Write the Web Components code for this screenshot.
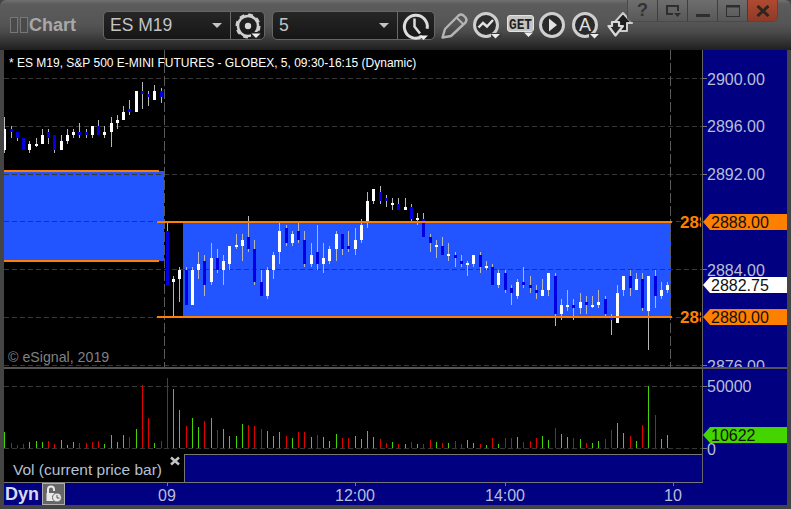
<!DOCTYPE html>
<html>
<head>
<meta charset="utf-8">
<title>Chart</title>
<style>
  html, body { margin: 0; padding: 0; background: #444; }
</style>
</head>
<body>
<trade-window>
  <trade-toolbar slot="toolbar">
    <symbol-combo value="ES M19" field="127" extra="35"><tool-icon name="gear"></tool-icon></symbol-combo>
    <symbol-combo value="5" field="125" extra="38"><tool-icon name="clock"></tool-icon></symbol-combo>
    <tool-icon name="pencil" class="tool"></tool-icon>
    <tool-icon name="trend" class="tool"></tool-icon>
    <tool-icon name="get" class="tool"></tool-icon>
    <tool-icon name="play" class="tool"></tool-icon>
    <tool-icon name="alert" class="tool"></tool-icon>
    <tool-icon name="arrows" class="tool"></tool-icon>
    <window-buttons></window-buttons>
  </trade-toolbar>
  <price-chart slot="price"></price-chart>
  <value-axis slot="priceaxis" origin="50" props='{"labels":[["2900.00",80],["2896.00",127],["2892.00",175],["2884.00",271],["2876.00",367]],"ticks":[78,126,174,269,365],"tags":[["2888.00",222,"#ff8000"],["2882.75",285,"#fff"],["2880.00",317,"#ff8000"]]}'></value-axis>
  <volume-chart slot="volume"></volume-chart>
  <study-legend slot="legend">Vol (current price bar)</study-legend>
  <time-axis slot="time"></time-axis>
  <value-axis slot="volaxis" origin="369" props='{"labels":[["50000",387],["0",450]],"ticks":[386,448],"tags":[["10622",435,"#44d400"]]}'></value-axis>
</trade-window>

<script>
const FONT = `"Liberation Sans", Arial, sans-serif`;

// candles read off the picture in 3x crop units: colour x wickTop wickBottom bodyTop bodyBottom
const CANDLES = [
  { ox: 0, oy: 75, rows: `W 14 126 234 162 225|B 34 153 189 162 171|B 52 171 198 171 189|B 70 189 225 189 225|W 88 198 234 207 225|W 109 189 216 207 213|W 127 162 207 180 207|B 145 162 207 171 189|B 163 180 234 180 225|W 184 180 225 198 225|W 202 162 207 180 198|W 220 162 189 171 180|B 238 144 189 171 180|B 259 162 189 171 180|W 277 153 189 153 180|B 295 135 180 153 180|W 313 153 189 171 180|W 334 126 216 144 171|W 352 120 162 135 144|W 370 93 135 111 135|B 388 75 120 102 111|W 409 48 111 48 111|B 427 21 102 48 57|B 445 48 93 57 66|W 463 30 75 48 75|B 484 39 84 48 66` },
  { ox: 0, oy: 220, rows: `B 502 6 195 33 195|W 520 168 290 177 186|W 538 141 246 150 177|B 559 141 255 150 255|W 577 141 255 150 255|W 595 96 177 132 150|B 613 105 228 123 195|W 634 69 195 114 186|B 652 87 159 114 150|W 670 105 195 123 150|W 688 78 150 78 132|W 709 42 87 75 81|W 727 42 123 60 78|B 745 -12 96 51 87|B 763 60 195 87 186` },
  { ox: 250, oy: 170, rows: `B 34 300 378 336 378|W 52 291 387 300 378|W 70 246 327 255 300|W 88 156 282 183 246|B 109 165 228 174 219|W 127 183 228 192 219|B 145 156 219 183 210|B 163 183 291 210 282|W 184 219 291 255 282|B 202 165 300 246 282|W 220 219 309 264 282|W 238 228 282 237 273|W 259 183 273 192 237|B 277 192 255 192 237|B 295 183 246 228 237|W 316 174 255 210 237|W 334 147 219 165 210|W 352 66 174 93 156|W 370 57 102 57 93|B 391 48 102 66 93|B 409 75 111 84 93|W 427 84 120 98 105|B 445 84 120 102 120|W 466 84 120 111 120|B 484 102 156 111 147|W 502 129 165 144 150|B 520 129 201 147 201|B 541 192 246 201 219|W 559 210 264 225 231|B 577 201 255 228 255|W 595 219 273 252 258|B 616 246 291 255 264|B 634 255 291 273 282|W 652 273 318 279 285|W 670 255 291 255 282` },
  { ox: 470, oy: 200, rows: `B 31 156 219 165 201|W 49 183 210 198 204|B 67 192 255 201 255|W 85 210 264 219 255|B 106 210 279 219 270|B 124 255 315 264 279|W 142 237 297 246 288|B 160 201 264 246 255|B 181 228 279 255 264|B 199 255 297 270 279|W 217 237 288 270 288|W 235 219 288 219 270|B 256 219 378 228 342|W 274 297 360 315 342|W 292 270 333 315 321|B 310 297 360 315 324|W 331 279 342 306 324|B 349 288 342 306 315|W 367 288 324 315 321|W 385 270 324 306 315|B 406 288 351 297 342|B 424 342 405 351 360|W 442 255 369 279 369|W 460 228 288 228 270|B 481 210 288 228 264|W 499 219 270 237 270|B 517 219 333 237 324|W 535 228 450 228 333|B 556 210 324 228 288|W 574 246 297 270 288|W 592 246 279 255 270` },
];

// volume bars in the same crop units: x top colour (g / r)
const VOLUME = [
  { ox: 0, rows: `14 201 g|34 234 r|52 240 r|70 237 r|88 231 g|109 228 g|127 231 g|145 228 r|163 237 r|184 225 g|202 240 g|220 231 g|238 234 r|259 234 r|277 231 r|295 228 r|313 237 g|334 210 g|352 231 g|370 210 g|388 216 r|409 192 g|427 60 r|445 159 r|463 234 g|484 228 r|502 39 r|520 72 g|538 135 g|559 183 r|577 159 g|595 186 g|613 168 r|634 159 g|652 195 r|670 192 g|688 213 g|709 213 g|727 177 g|745 180 r|763 183 r|784 192 r|802 198 g|820 213 g|838 201 g|859 213 r|877 219 g|895 201 r|913 201 r|934 216 g|952 210 r|970 216 g|988 228 g|1009 207 g` },
  { ox: 340, rows: `7 219 r|25 219 r|46 213 g|64 222 g|82 198 g|100 216 g|121 222 r|139 234 r|157 231 g|175 237 r|196 237 g|214 231 r|232 237 g|250 237 r|271 225 r|289 231 g|307 234 r|325 234 g|346 228 r|364 237 r|382 225 g|400 234 g|421 237 r|439 240 g|457 219 r|475 237 g|496 219 r|514 219 r|532 216 g|550 231 r|571 228 r|589 219 r|607 213 g|625 225 g|646 189 r|664 207 g|682 216 g|700 219 r|721 222 g|739 234 r|757 234 g|775 228 g|796 222 r|814 195 r|832 174 g|850 204 g|871 213 r|889 228 g|907 180 r|925 63 g|946 150 r|964 222 g|982 210 g` },
];

class TradeWindow extends HTMLElement {
  constructor() {
    super();
    this.attachShadow({ mode: "open" });
  }

  connectedCallback() {
    this.shadowRoot.innerHTML = `
      <style>
        :host {
          display: block;
          width: 791px;
          height: 509px;
          background: #444;
          overflow: hidden;
          font-family: ${FONT};
        }
        .body {
          display: grid;
          grid-template-columns: 699px 84px;
          grid-template-rows: 317px 2px 85px 28px 23px;
          margin: 0 4px;
        }
        .divider { grid-column: 1 / 3; background: #555; }
        .vol-axis { grid-row: 3 / 6; grid-column: 2; display: grid; }
      </style>
      <slot name="toolbar"></slot>
      <div class="body">
        <slot name="price"></slot>
        <slot name="priceaxis"></slot>
        <div class="divider"></div>
        <slot name="volume"></slot>
        <div class="vol-axis"><slot name="volaxis"></slot></div>
        <slot name="legend"></slot>
        <slot name="time"></slot>
      </div>`;
  }
}

class TradeToolbar extends HTMLElement {
  constructor() {
    super();
    this.attachShadow({ mode: "open" });
  }

  connectedCallback() {
    this.shadowRoot.innerHTML = `
      <style>
        :host {
          display: flex;
          align-items: center;
          position: relative;
          height: 50px;
          box-sizing: border-box;
          padding: 0 0 0 10px;
          background: linear-gradient(#717171 0, #5c5c5c 4px, #555 24px, #4a4a4a 32px, #1f1f1f 50px);
          border-radius: 6px 6px 0 0;
        }
        .grip {
          width: 8px;
          height: 16px;
          box-sizing: border-box;
          border: 1px solid #777;
          background: #4a4a4a;
          margin-right: 2px;
        }
        .title {
          width: 74px;
          margin-left: -1px;
          font-size: 18px;
          font-weight: bold;
          color: #a8a8a8;
        }
        ::slotted(symbol-combo) { margin-right: 7px; }
        ::slotted(symbol-combo:nth-of-type(2)) { margin-right: 2px; }
      </style>
      <span class="grip"></span><span class="grip"></span>
      <span class="title">Chart</span>
      <slot></slot>`;
  }
}

class SymbolCombo extends HTMLElement {
  constructor() {
    super();
    this.attachShadow({ mode: "open" });
  }

  connectedCallback() {
    const field = this.getAttribute("field");
    const extra = this.getAttribute("extra");
    this.shadowRoot.innerHTML = `
      <style>
        :host {
          display: flex;
          align-self: flex-start;
          height: 29px;
          margin-top: 11px;
          background: linear-gradient(#262626, #161616);
          border: 1px solid #666;
          border-radius: 5px;
          box-sizing: border-box;
        }
        .field {
          display: flex;
          align-items: center;
          justify-content: space-between;
          width: ${field}px;
          box-sizing: border-box;
          padding: 0 8px 0 6px;
          border-right: 1px solid #6a6a6a;
          font-size: 17.5px;
          color: #c4c4c4;
        }
        .caret {
          width: 0;
          height: 0;
          border: 5px solid transparent;
          border-top: 5px solid #c4c4c4;
          border-bottom: 0;
        }
        .icon { display: flex; align-items: center; justify-content: center; width: ${extra - 2}px; }
      </style>
      <div class="field"><span>${this.getAttribute("value")}</span><span class="caret"></span></div>
      <div class="icon"><slot></slot></div>`;
  }
}

class ToolIcon extends HTMLElement {
  constructor() {
    super();
    this.attachShadow({ mode: "open" });
  }

  connectedCallback() {
    const caret = (x, y) => `<path d="M${x} ${y}h9l-4.5 4.5z" fill="#eee"/>`;
    const icons = {
      gear: `<circle cx="16" cy="16" r="10" fill="none" stroke="#cfcfcf" stroke-width="2.5"/>
        <circle cx="16" cy="16" r="11.5" fill="none" stroke="#cfcfcf" stroke-width="2" stroke-dasharray="5 4"/>
        <circle cx="16" cy="16" r="3.2" fill="#d8d8d8"/>
        <rect x="19" y="22" width="10" height="7" fill="#222"/>${caret(19.5, 23.5)}`,
      clock: `<path d="M24.5 24.5A11.5 11.5 0 1 1 27.5 16" transform="rotate(14 16 16)" fill="none" stroke="#dcdcdc" stroke-width="3"/>
        <path d="M14.5 8.5v8l5.5 7" fill="none" stroke="#dcdcdc" stroke-width="2.5"/>${caret(19, 25.5)}`,
      pencil: `<path d="M5.500 28.500L8 20L21.500 6.500Q24 4.500 26.500 6.500L28.500 8.500Q30.500 11 28.500 13.500L14 27Z" fill="none" stroke="#b4b4b4" stroke-width="2.4" stroke-linejoin="round"/>
        <path d="M19.500 8.500L26.500 15.500" stroke="#b4b4b4" stroke-width="2"/>`,
      trend: `<circle cx="16" cy="16" r="11.500" fill="#2c2c2c" stroke="#cfcfcf" stroke-width="3"/>
        <path d="M8.500 18.500L13 14L17 17.500L23 11" fill="none" stroke="#e4e4e4" stroke-width="2.4"/>
        <rect x="21" y="24" width="11" height="7" fill="#3a3a3a"/>${caret(21, 25)}`,
      get: `<rect x="4.500" y="6.500" width="26" height="16" rx="2.500" fill="#c4c4c4" stroke="#e4e4e4"/>
        <text x="17.500" y="19.500" text-anchor="middle" font-family='"Liberation Mono", monospace' font-weight="bold" font-size="15" fill="#222" textLength="23" lengthAdjust="spacingAndGlyphs">GET</text>
        ${caret(21, 23.5)}`,
      play: `<circle cx="16" cy="16" r="11.500" fill="#2a2a2a" stroke="#cfcfcf" stroke-width="3"/>
        <path d="M13 9.500L21 16L13 22.500Z" fill="#e2e2e2"/>`,
      alert: `<circle cx="16" cy="16" r="11.500" fill="#2a2a2a" stroke="#cfcfcf" stroke-width="3"/>
        <text x="16" y="22" text-anchor="middle" font-family="Liberation Sans, sans-serif" font-size="18" fill="#e2e2e2">A</text>
        <rect x="20" y="24" width="11" height="7" fill="#3a3a3a"/>${caret(21, 25)}`,
      arrows: `<path d="M12 14L21 4L30 14H25V22H17V14Z" fill="#1c1c1c" stroke="#ccc" stroke-width="2" stroke-linejoin="round"/>
        <path d="M6.500 17H10V13H17V17H21L13.500 26.500Z" fill="#2a2a2a" stroke="#d8d8d8" stroke-width="2.200" stroke-linejoin="round"/>`,
    };
    this.shadowRoot.innerHTML = `
      <style>
        :host { display: block; width: ${this.classList.contains("tool") ? 33 : 32}px; height: 32px; flex: none; }
        svg { display: block; overflow: visible; }
      </style>
      <svg width="32" height="32" viewBox="0 0 32 32">${icons[this.getAttribute("name")]}</svg>`;
  }
}

class WindowButtons extends HTMLElement {
  constructor() {
    super();
    this.attachShadow({ mode: "open" });
  }

  connectedCallback() {
    this.shadowRoot.innerHTML = `
      <style>
        :host {
          position: absolute;
          top: 0;
          right: 13px;
          display: flex;
          height: 21px;
          border: 1px solid #4a4a4a;
          border-top: 0;
          border-radius: 0 0 5px 5px;
          overflow: hidden;
        }
        .btn {
          display: flex;
          align-items: center;
          justify-content: center;
          width: 29px;
          background: linear-gradient(#6e6e6e, #585858);
          border-right: 1px solid #3e3e3e;
          color: #333;
          font-size: 18px;
          font-weight: bold;
        }
        .btn:last-child {
          border-right: 0;
          background: linear-gradient(#b04a30, #8e3a28);
        }
      </style>
      <div class="btn">?</div>
      <div class="btn"><svg width="16" height="14" viewBox="0 0 16 14"><path d="M8 10H2V2H13V7" fill="none" stroke="#2e2e2e" stroke-width="2"/><path d="M9 9h7l-3.500 4z" fill="#2e2e2e"/></svg></div>
      <div class="btn"><svg width="14" height="14" viewBox="0 0 14 14"><rect y="10" width="14" height="3" fill="#2e2e2e"/></svg></div>
      <div class="btn"><svg width="14" height="12" viewBox="0 0 14 12"><rect x=".5" y=".5" width="13" height="11" fill="none" stroke="#2e2e2e"/><rect width="14" height="2.500" fill="#2e2e2e"/></svg></div>
      <div class="btn"><svg width="14" height="12" viewBox="0 0 14 12"><path d="M1.500 1L12.500 11M12.500 1L1.500 11" stroke="#2e2420" stroke-width="3"/></svg></div>`;
  }
}

class PriceChart extends HTMLElement {
  constructor() {
    super();
    this.attachShadow({ mode: "open" });
  }

  connectedCallback() {
    this.render();
  }

  candles() {
    let out = "";
    CANDLES.forEach(({ ox, oy, rows }) => {
      rows.split("|").forEach((row) => {
        const [c, ...nums] = row.split(" ");
        const [xz, wt, wb, bt, bb] = nums.map(Number);
        const x = Math.floor(ox + xz / 3);
        const y = (z) => oy + z / 3;
        out += `<rect x="${x}" y="${y(wt)}" width="1" height="${(wb - wt) / 3}" fill="#b8b8b8"/>`;
        out += `<rect x="${x - 1}" y="${y(bt)}" width="3" height="${(bb - bt) / 3}" fill="${c === "W" ? "#fff" : "#0000e0"}"/>`;
      });
    });
    return out;
  }

  render() {
    const grid = [78, 126, 174, 221, 269, 317, 365]
      .map((y) => `<line x1="4" x2="702" y1="${y + 0.5}" y2="${y + 0.5}" stroke="#363636" stroke-dasharray="5 3"/>`)
      .join("");
    const vertical = [164, 670]
      .map((x) => `<line x1="${x + 0.5}" x2="${x + 0.5}" y1="50" y2="367" stroke="#5a5a5a" stroke-dasharray="10 3"/>`)
      .join("");

    this.shadowRoot.innerHTML = `
      <style>
        :host {
          display: block;
          position: relative;
          height: 317px;
          background: #000;
          border-right: 1px solid #666;
          overflow: hidden;
          font-family: ${FONT};
        }
        svg { display: block; shape-rendering: crispEdges; }
        .title { position: absolute; left: 5px; top: 6px; color: #fff; font-size: 12px; line-height: 14px; white-space: nowrap; }
        .copy { position: absolute; left: 4px; top: 299px; color: #808080; font-size: 14.2px; line-height: 16px; }
        .level { position: absolute; left: 676px; width: 21px; overflow: hidden; color: #ff8000; font-size: 17px; font-weight: bold; line-height: 18px; }
      </style>
      <svg width="698" height="317" viewBox="4 50 698 317">
        <rect x="4" y="171" width="160" height="90" fill="#2255ff"/>
        <rect x="183" y="222" width="488" height="95" fill="#2255ff"/>
        ${grid}
        ${vertical}
        ${this.candles()}
        <rect x="4" y="170" width="155" height="2" fill="#ff8000"/>
        <rect x="4" y="260" width="155" height="2" fill="#ff8000"/>
        <rect x="157" y="221" width="515" height="2" fill="#ff8000"/>
        <rect x="157" y="316" width="515" height="2" fill="#ff8000"/>
      </svg>
      <div class="title">* ES M19, S&amp;P 500 E-MINI FUTURES - GLOBEX, 5, 09:30-16:15 (Dynamic)</div>
      <div class="copy">© eSignal, 2019</div>
      <div class="level" style="top:164px">2888.00</div>
      <div class="level" style="top:259px">2880.00</div>`;
  }
}

class VolumeChart extends HTMLElement {
  constructor() {
    super();
    this.attachShadow({ mode: "open" });
  }

  connectedCallback() {
    let bars = "";
    VOLUME.forEach(({ ox, rows }) => {
      rows.split("|").forEach((row) => {
        const [xz, top, c] = row.split(" ");
        const y = 365 + top / 3;
        bars += `<rect x="${Math.floor(ox + xz / 3)}" y="${y}" width="1" height="${448 - y}" fill="${c === "g" ? "#44d400" : "#e00000"}"/>`;
      });
    });
    this.shadowRoot.innerHTML = `
      <style>
        :host { display: block; height: 85px; background: #000; border-right: 1px solid #666; overflow: hidden; }
        svg { display: block; shape-rendering: crispEdges; }
      </style>
      <svg width="698" height="85" viewBox="4 369 698 85">
        <line x1="4" x2="702" y1="386.500" y2="386.500" stroke="#363636" stroke-dasharray="5 3"/>
        <line x1="4" x2="702" y1="448.500" y2="448.500" stroke="#363636" stroke-dasharray="5 3"/>
        ${bars}
      </svg>`;
  }
}

class StudyLegend extends HTMLElement {
  constructor() {
    super();
    this.attachShadow({ mode: "open" });
  }

  connectedCallback() {
    this.shadowRoot.innerHTML = `
      <style>
        :host {
          display: flex;
          height: 28px;
          box-sizing: border-box;
          border-right: 1px solid #666;
          font-family: ${FONT};
        }
        .label {
          display: flex;
          position: relative;
          align-items: center;
          width: 180px;
          box-sizing: border-box;
          padding: 3px 0 0 9px;
          background: #000;
          color: #b4c0d4;
          font-size: 15.5px;
          white-space: nowrap;
        }
        svg { position: absolute; left: 166px; top: 2px; }
        .rest { flex: 1; background: #000080; border-top: 1px solid #777; border-left: 1px solid #777; }
      </style>
      <div class="label"><slot></slot><svg width="10" height="10" viewBox="0 0 10 10"><path d="M1 1.500L9 8.500M9 1.500L1 8.500" stroke="#c4c4c4" stroke-width="2.500"/></svg></div>
      <div class="rest"></div>`;
  }
}

class TimeAxis extends HTMLElement {
  constructor() {
    super();
    this.attachShadow({ mode: "open" });
  }

  connectedCallback() {
    const ticks = [["09", 167], ["12:00", 355], ["14:00", 505], ["10", 673]]
      .map(([t, x]) => `<i style="left:${x - 4}px"></i><span style="left:${x - 4}px">${t}</span>`)
      .join("");
    this.shadowRoot.innerHTML = `
      <style>
        :host {
          display: flex;
          align-items: center;
          position: relative;
          height: 23px;
          box-sizing: border-box;
          background: #000080;
          border-top: 1px solid #777;
          font-family: ${FONT};
        }
        b { margin-left: 1px; width: 37px; color: #d6daf0; font-size: 18px; }
        .lock {
          display: flex;
          width: 23px;
          height: 22px;
          box-sizing: border-box;
          background: #666;
          border: 1px solid #b0b0b0;
        }
        i { position: absolute; top: 0; width: 1px; height: 3px; background: #777; }
        span { position: absolute; top: 4px; transform: translateX(-50%); color: #b8bed8; font-size: 16px; line-height: 18px; }
      </style>
      <b>Dyn</b>
      <div class="lock"><svg width="21" height="20" viewBox="0 0 21 20"><path d="M5 9V5.500a3 3 0 0 1 6 0V7" fill="none" stroke="#e8e8e8" stroke-width="2"/><rect x="3.500" y="9" width="8" height="8" fill="#e8e8e8"/><circle cx="14" cy="13.500" r="4.500" fill="#e8e8e8" stroke="#666"/><path d="M14 11v3h2.500" fill="none" stroke="#555"/></svg></div>
      ${ticks}`;
  }
}

class ValueAxis extends HTMLElement {
  constructor() {
    super();
    this.attachShadow({ mode: "open" });
  }

  connectedCallback() {
    this.props = JSON.parse(this.getAttribute("props") || "{}");
    const origin = Number(this.getAttribute("origin"));
    const labels = this.props.labels
      .map(([t, y]) => `<span class="label" style="top:${y - origin - 9}px">${t}</span>`)
      .join("");
    const ticks = this.props.ticks
      .map((y) => `<i style="top:${y - origin}px"></i>`)
      .join("");
    const tags = this.props.tags
      .map(([t, y, c]) => `<div class="tag" style="top:${y - origin - 8}px;background:${c}">${t}</div>`)
      .join("");
    this.shadowRoot.innerHTML = `
      <style>
        :host {
          display: block;
          position: relative;
          background: #000080;
          overflow: hidden;
          font-family: ${FONT};
          font-size: 16px;
        }
        .label { position: absolute; left: 4px; color: #b8bed8; line-height: 18px; }
        i { position: absolute; left: 0; width: 4px; height: 1px; background: #777; }
        .tag {
          position: absolute;
          left: 0;
          right: 0;
          height: 16px;
          box-sizing: border-box;
          padding-left: 8px;
          line-height: 18px;
          color: #111;
          clip-path: polygon(0 50%, 7px 0, 100% 0, 100% 100%, 7px 100%);
        }
      </style>
      ${labels}${ticks}${tags}`;
  }
}

customElements.define("trade-window", TradeWindow);
customElements.define("trade-toolbar", TradeToolbar);
customElements.define("symbol-combo", SymbolCombo);
customElements.define("tool-icon", ToolIcon);
customElements.define("window-buttons", WindowButtons);
customElements.define("price-chart", PriceChart);
customElements.define("volume-chart", VolumeChart);
customElements.define("study-legend", StudyLegend);
customElements.define("time-axis", TimeAxis);
customElements.define("value-axis", ValueAxis);
</script>
</body>
</html>
